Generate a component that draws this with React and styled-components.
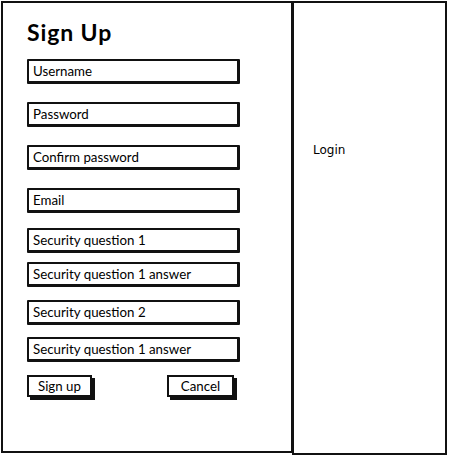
import React from 'react';
import styled, { createGlobalStyle } from 'styled-components';

const GlobalStyle = createGlobalStyle`
  html, body {
    margin: 0;
    padding: 0;
    background: #fff;
  }
`;

const Page = styled.div`
  width: 449px;
  height: 456px;
  box-sizing: border-box;
  padding: 1px 2px 1px 1px;
  display: flex;
  font-family: Lato, 'Open Sans', sans-serif;
  color: #000;
`;

const SignUpPanel = styled.div`
  width: 291px;
  height: 452px;
  box-sizing: border-box;
  border: 2px solid #111;
  border-right-width: 1px;
  padding: 15px 0 0 24px;
  display: flex;
  flex-direction: column;
`;

const LoginPanel = styled.div`
  flex: 1;
  height: 454px;
  box-sizing: border-box;
  border: 2px solid #111;
  padding: 140px 0 0 19px;
`;

const Title = styled.h1`
  margin: 0;
  font-size: 23px;
  line-height: 28px;
  font-weight: 700;
  letter-spacing: 0.9px;
`;

const Field = styled.div`
  width: 213px;
  height: 25px;
  box-sizing: border-box;
  margin-top: ${p => p.offset}px;
  border: 2px solid #111;
  border-right-width: 3px;
  border-bottom-width: 3px;
  border-radius: 1px;
  padding: 0 0 0 4px;
  display: flex;
  align-items: center;
  font-size: 13.3px;
  line-height: 16px;
`;

const Actions = styled.div`
  width: 207px;
  margin-top: 13px;
  display: flex;
  justify-content: space-between;
`;

const Button = styled.div`
  width: ${p => p.width}px;
  height: 22px;
  box-sizing: border-box;
  border: 2px solid #111;
  box-shadow: 3px 3px 0 #111;
  display: flex;
  align-items: center;
  justify-content: center;
  font-size: 13.3px;
`;

const LoginLabel = styled.div`
  font-family: 'DejaVu Sans', 'Liberation Sans', sans-serif;
  font-size: 12px;
  line-height: 15px;
`;

const fields = [
  { label: 'Username', offset: 13 },
  { label: 'Password', offset: 18 },
  { label: 'Confirm password', offset: 18 },
  { label: 'Email', offset: 18 },
  { label: 'Security question 1', offset: 15 },
  { label: 'Security question 1 answer', offset: 9 },
  { label: 'Security question 2', offset: 13 },
  { label: 'Security question 1 answer', offset: 12 }
];

export default function App() {
  return (
    <>
      <GlobalStyle />
      <Page>
        <SignUpPanel>
          <Title>Sign Up</Title>
          {fields.map((f, i) => (
            <Field key={i} offset={f.offset}>
              {f.label}
            </Field>
          ))}
          <Actions>
            <Button width={65}>Sign up</Button>
            <Button width={67}>Cancel</Button>
          </Actions>
        </SignUpPanel>
        <LoginPanel>
          <LoginLabel>Login</LoginLabel>
        </LoginPanel>
      </Page>
    </>
  );
}
